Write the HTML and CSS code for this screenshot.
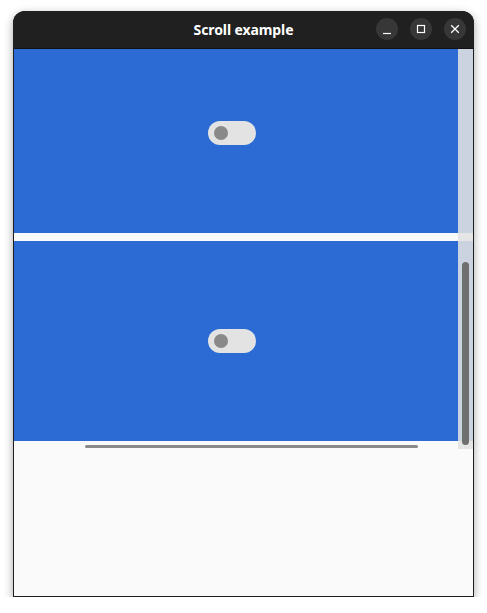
FILE: index.html
```html
<!DOCTYPE html>
<html>
<head>
<meta charset="utf-8">
<link rel="stylesheet" href="styles.css">
</head>
<body>
<div class="window">
  <div class="titlebar">
    <div class="title">Scroll example</div>
    <div class="controls">
      <div class="btn"><svg width="22" height="22" viewBox="0 0 22 22"><path d="M7 15.5h8" stroke="#fff" stroke-width="1.2"/></svg></div>
      <div class="btn"><svg width="22" height="22" viewBox="0 0 22 22"><rect x="7.5" y="7.5" width="7" height="7" fill="none" stroke="#fff" stroke-width="1.2"/></svg></div>
      <div class="btn"><svg width="22" height="22" viewBox="0 0 22 22"><path d="M7.2 7.2l7.6 7.6M14.8 7.2l-7.6 7.6" stroke="#fff" stroke-width="1.3"/></svg></div>
    </div>
  </div>
  <div class="content">
    <div class="scroller">
      <div class="list">
        <div class="panel"><div class="toggle"><div class="knob"></div></div></div>
        <div class="panel"><div class="toggle"><div class="knob"></div></div></div>
      </div>
      <div class="vtrack"><div class="vthumb"></div></div>
      <div class="hbar"></div>
    </div>
  </div>
</div>
</body>
</html>
```
FILE: styles.css
```css
html, body {
  margin: 0;
  padding: 0;
  background: #ffffff;
}
body {
  padding: 11px 0 0 13px;
  font-family: "Noto Sans", "Open Sans", sans-serif;
}
.window {
  width: 461px;
  border-radius: 12px 12px 0 0;
  box-shadow: 0 3px 10px rgba(0,0,0,0.35);
  background: #202020;
}
.titlebar {
  height: 37px;
  background: #202020;
  border-radius: 12px 12px 0 0;
  position: relative;
  display: flex;
  align-items: center;
  justify-content: center;
  border-bottom: 1px solid #111;
}
.title {
  color: #ffffff;
  font-weight: 700;
  font-size: 14px;
  letter-spacing: -0.1px;
  margin-left: 0;
}
.controls {
  position: absolute;
  right: 8px;
  top: 7px;
  display: flex;
  gap: 12px;
}
.btn {
  width: 22px;
  height: 22px;
  border-radius: 50%;
  background: #373737;
  display: flex;
}
.content {
  height: 547px;
  background: #fafafa;
  border: 1px solid #1e1e1e;
  border-top: none;
}
.scroller {
  height: 400px;
  overflow: hidden;
  position: relative;
}
.list {
  margin-top: -16px;
  display: flex;
  flex-direction: column;
  gap: 8px;
}
.panel {
  height: 200px;
  background: #2b6bd3;
  display: flex;
  align-items: center;
  justify-content: center;
  padding-right: 23px;
}
.toggle {
  width: 48px;
  height: 24px;
  border-radius: 12px;
  background: #e3e3e3;
  display: flex;
  align-items: center;
  padding-left: 6px;
  box-sizing: border-box;
}
.knob {
  width: 14px;
  height: 14px;
  border-radius: 50%;
  background: #898989;
}
.vtrack {
  position: absolute;
  right: 0;
  top: 0;
  width: 15px;
  height: 400px;
  background: rgba(225,225,225,0.88);
}
.vthumb {
  position: absolute;
  left: 4px;
  top: 213px;
  width: 7px;
  height: 183px;
  border-radius: 4px;
  background: #6f6f6f;
}
.hbar {
  position: absolute;
  left: 71px;
  top: 396px;
  width: 333px;
  height: 3px;
  border-radius: 2px;
  background: #8a8a8a;
}
```
